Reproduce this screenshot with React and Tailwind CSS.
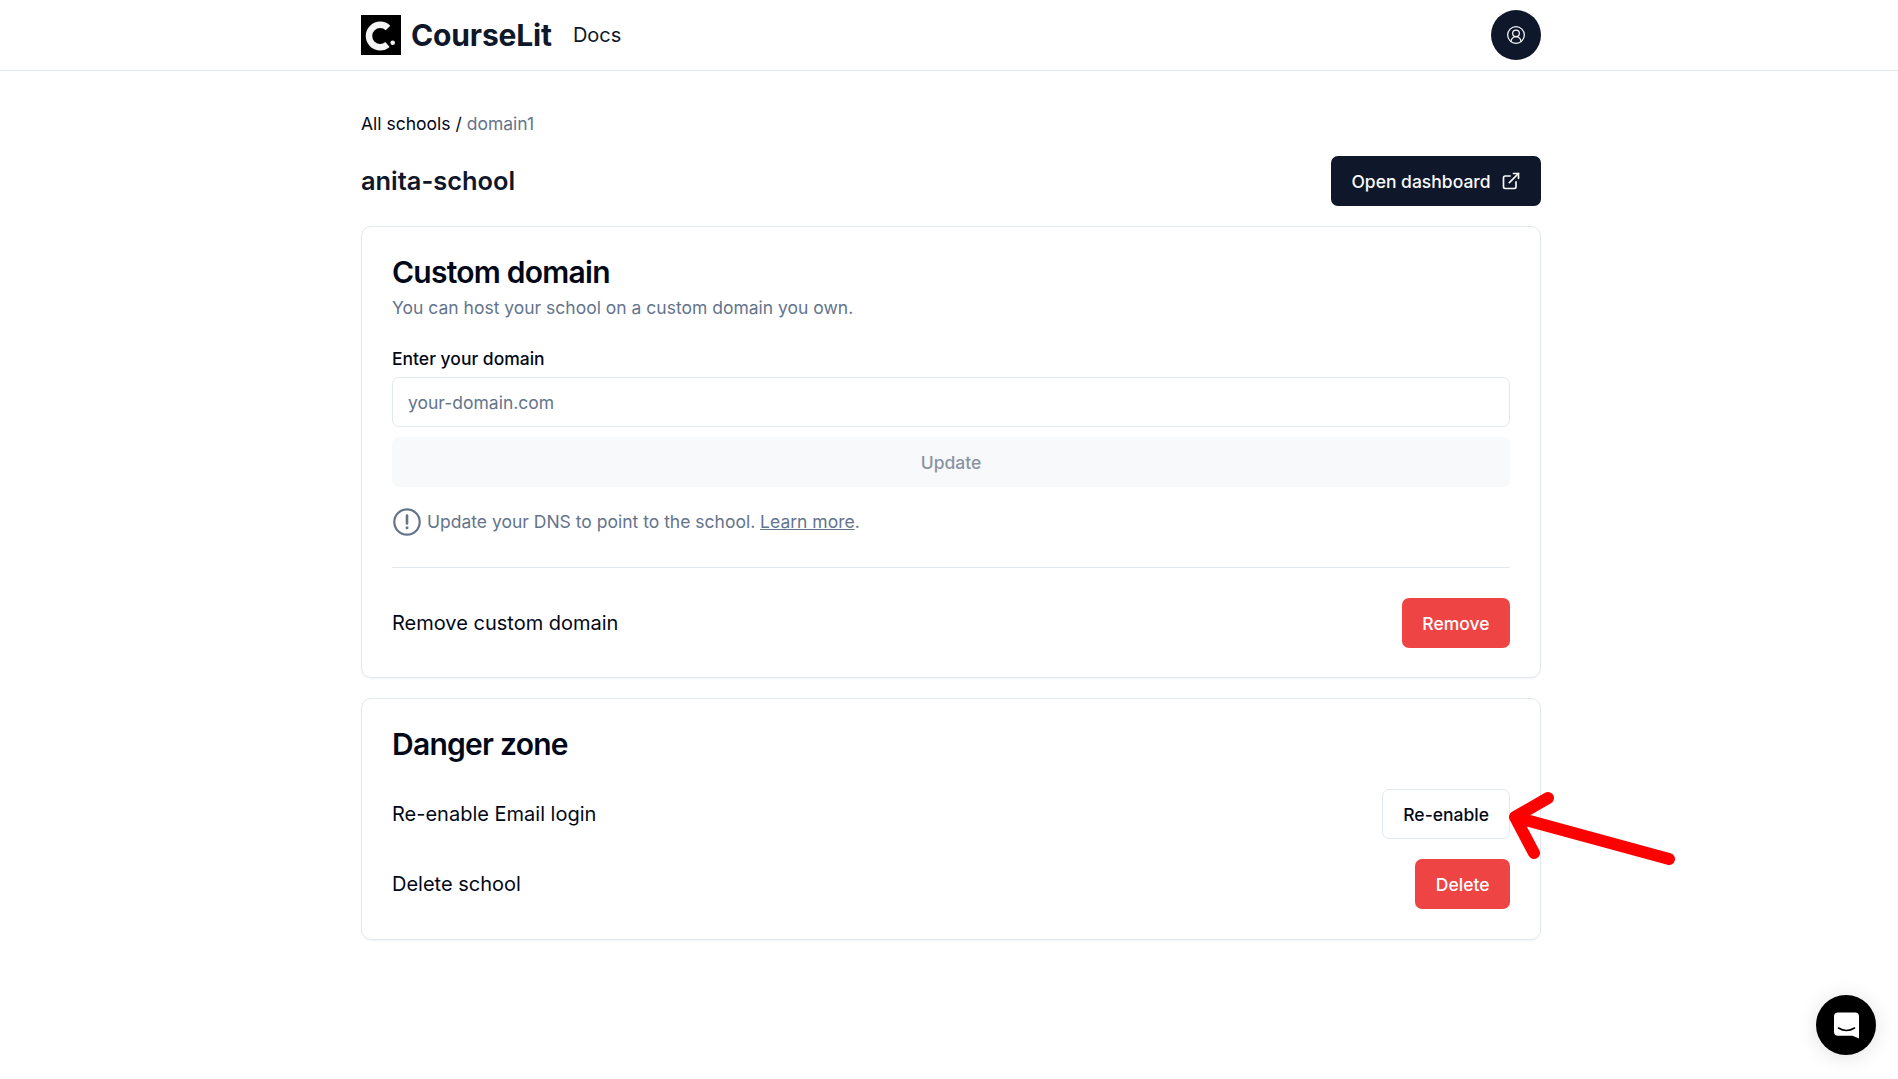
import { CircleUserRound, ExternalLink } from 'lucide-react';

function Logo() {
  return (
    <svg width="40" height="40" viewBox="0 0 40 40" className="shrink-0">
      <rect width="40" height="40" fill="#000" />
      <path d="M27 13 A11.2 11.2 0 1 0 26.5 29.5" fill="none" stroke="#f4f4f4" strokeWidth="6.5" />
      <circle cx="31.7" cy="27.7" r="2.3" fill="#f4f4f4" />
    </svg>
  );
}

function ArrowMark() {
  return (
    <svg
      width="180"
      height="80"
      viewBox="0 0 180 80"
      className="absolute left-[1500px] top-[785px] pointer-events-none"
    >
      <path
        d="M15 32 L169 74 M15 32 L48 13 M15 32 L34 68"
        fill="none"
        stroke="#ff0000"
        strokeWidth="12"
        strokeLinecap="round"
        strokeLinejoin="round"
      />
    </svg>
  );
}

function Row({ label, children }) {
  return (
    <div className="flex items-center justify-between">
      <span className="text-[20px] text-[#020817]">{label}</span>
      {children}
    </div>
  );
}

function RedButton({ children }) {
  return (
    <button className="h-[50px] px-[20.5px] pt-[2px] rounded-[7px] bg-[#ef4444] text-white text-[17.5px] font-medium">
      {children}
    </button>
  );
}

export default function App() {
  return (
    <div
      className="relative min-h-[1079px] bg-white text-[#020817] overflow-hidden"
      style={{ fontFamily: "Inter, sans-serif" }}
    >
      <header className="h-[71px] border-b border-[#e2e8f0]">
        <div className="w-[1180px] ml-[361px] h-[70px] flex items-center justify-between">
          <div className="flex items-center">
            <Logo />
            <span className="ml-[10px] text-[30px] font-bold text-[#0f172a] tracking-[-0.15px]">CourseLit</span>
            <span className="ml-[21px] text-[20px] text-[#0f172a]">Docs</span>
          </div>
          <div className="w-[50px] h-[50px] rounded-full bg-[#0f172a] flex items-center justify-center">
            <CircleUserRound size={20} color="#f8fafc" strokeWidth={1.5} />
          </div>
        </div>
      </header>

      <main className="w-[1180px] ml-[361px]">
        <div className="mt-[41px] h-[24px] flex items-center text-[17.5px]">
          <span className="text-[#020817]">All schools /&nbsp;</span>
          <span className="text-[#64748b]">domain1</span>
        </div>

        <div className="mt-[20px] flex items-center justify-between">
          <h1 className="text-[25.4px] font-semibold text-[#0f172a]">anita-school</h1>
          <button className="h-[50px] w-[210px] pt-[2px] rounded-[7px] bg-[#0f172a] text-[#f8fafc] text-[17.5px] font-medium flex items-center justify-center gap-[10px]">
            Open dashboard
            <ExternalLink size={20} strokeWidth={2} className="-mt-[2px]" />
          </button>
        </div>

        <section className="mt-[20px] border border-[#e2e8f0] rounded-[10px] px-[30px] pt-[26px] pb-[29px] shadow-[0_1px_2px_rgba(0,0,0,0.05)]">
          <h2 className="text-[30px] leading-[38px] font-semibold tracking-[-0.75px]">Custom domain</h2>
          <p className="mt-[5px] h-[24px] leading-[24px] text-[17.5px] text-[#64748b]">
            You can host your school on a custom domain you own.
          </p>

          <label className="block mt-[27px] h-[24px] leading-[24px] text-[17.5px] font-medium">Enter your domain</label>
          <input
            placeholder="your-domain.com"
            className="mt-[6px] block w-full h-[50px] px-[15px] rounded-[7px] border border-[#e2e8f0] text-[17.5px] outline-none placeholder:text-[#64748b]"
          />
          <button className="mt-[10px] pt-[2px] block w-full h-[50px] rounded-[7px] bg-[#f8f9fb] text-[#8a93a3] text-[17.5px] font-medium">
            Update
          </button>

          <div className="mt-[20px] h-[30px] flex items-center gap-[5px] text-[17.5px] text-[#64748b]">
            <svg width="30" height="30" viewBox="0 0 30 30" fill="none" className="shrink-0">
              <circle cx="15" cy="15" r="12.7" stroke="#64748b" strokeWidth="2.2" />
              <path d="M15 8.5 V16.5" stroke="#64748b" strokeWidth="2.6" strokeLinecap="round" />
              <circle cx="15" cy="20.7" r="1.5" fill="#64748b" />
            </svg>
            <span className="pt-[1px]">
              Update your DNS to point to the school. <a className="underline">Learn more</a>.
            </span>
          </div>

          <div className="mt-[30px] mb-[30px] border-t border-[#e2e8f0]" />

          <Row label="Remove custom domain">
            <RedButton>Remove</RedButton>
          </Row>
        </section>

        <section className="mt-[20px] border border-[#e2e8f0] rounded-[10px] px-[30px] pt-[26px] pb-[30px] shadow-[0_1px_2px_rgba(0,0,0,0.05)]">
          <h2 className="text-[30px] leading-[38px] font-semibold tracking-[-0.75px]">Danger zone</h2>
          <div className="mt-[26px] flex flex-col gap-[20px]">
            <Row label="Re-enable Email login">
              <button className="h-[50px] px-[20px] pt-[2px] rounded-[7px] border border-[#e2e8f0] bg-white text-[17.5px] font-medium">
                Re-enable
              </button>
            </Row>
            <Row label="Delete school">
              <RedButton>Delete</RedButton>
            </Row>
          </div>
        </section>
      </main>

      <ArrowMark />

      <button className="absolute left-[1816px] top-[995px] w-[60px] h-[60px] rounded-full bg-black flex items-center justify-center shadow-[0_2px_20px_rgba(0,0,0,0.12)]">
        <svg width="27" height="29" viewBox="0 0 27 29">
          <path
            d="M5 1.5 H22 A4 4 0 0 1 26 5.5 V27.5 L19.5 24.7 H5 A4 4 0 0 1 1 20.7 V5.5 A4 4 0 0 1 5 1.5 Z"
            fill="#fff"
          />
          <path d="M5.5 17 Q13.5 22 21.5 17" fill="none" stroke="#000" strokeWidth="1.6" strokeLinecap="round" />
        </svg>
      </button>
    </div>
  );
}
